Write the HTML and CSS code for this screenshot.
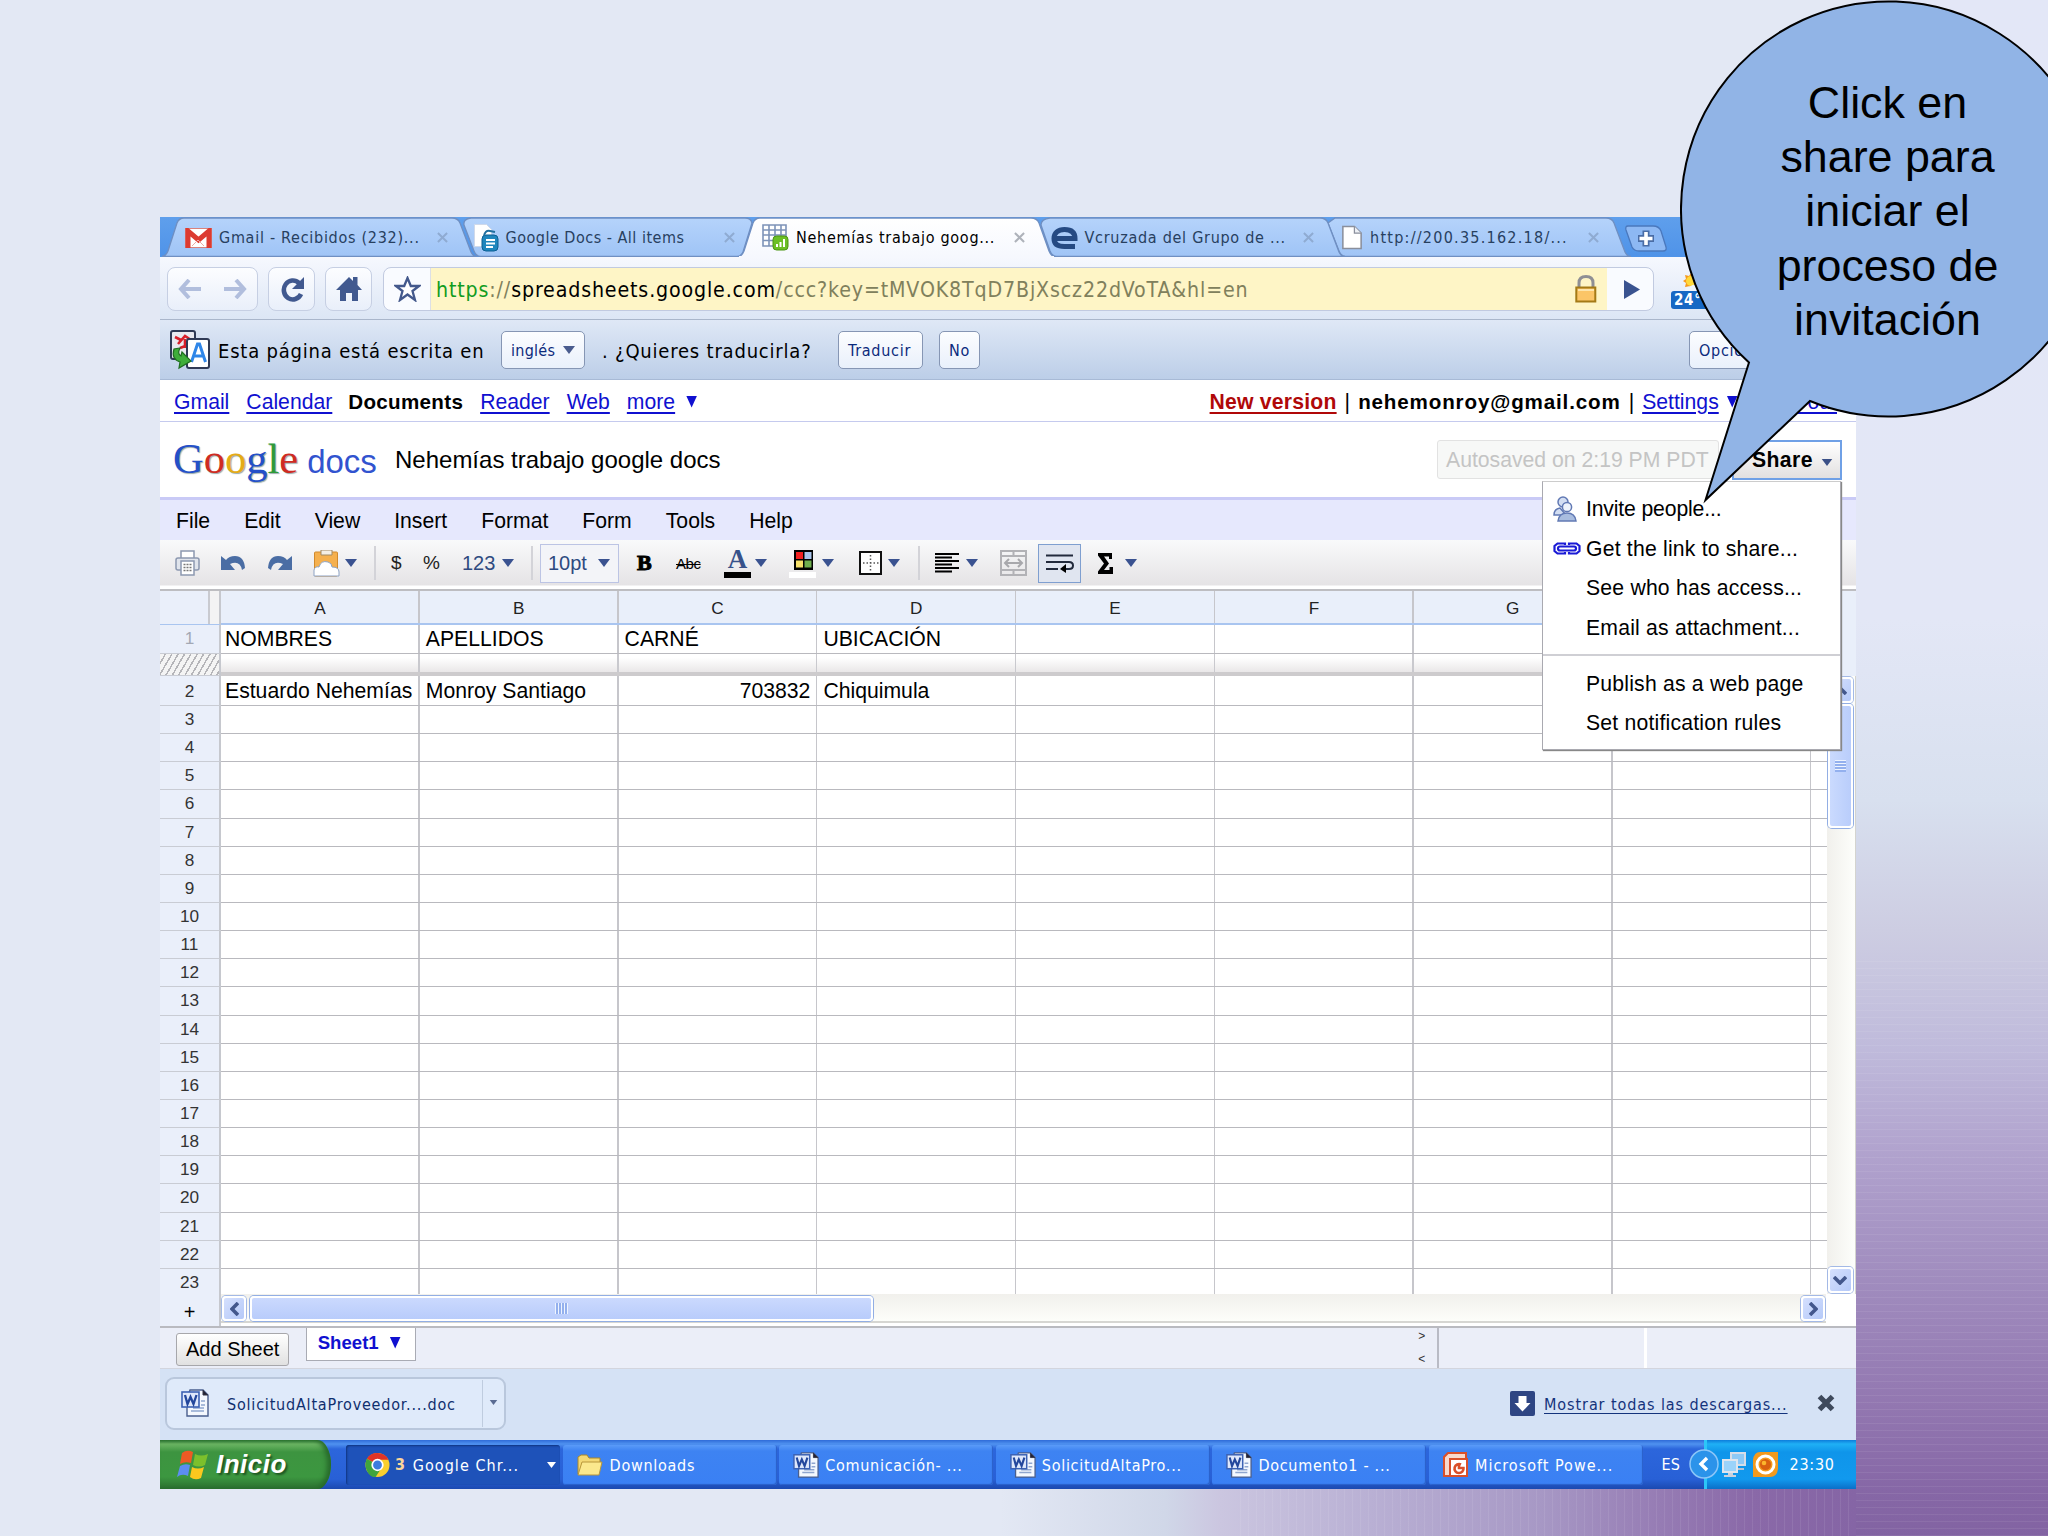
FILE: index.html
```html
<!DOCTYPE html>
<html lang="es">
<head>
<meta charset="utf-8">
<title>Nehemías trabajo google docs</title>
<link rel="stylesheet" href="styles.css">
</head>
<body>
<svg class="defs" width="0" height="0" aria-hidden="true">
  <symbol id="caret" viewBox="0 0 12 8"><path d="M0 0h12L6 8z" fill="currentColor"/></symbol>
  <symbol id="word" viewBox="0 0 28 28">
    <path d="M9 1h13l5 5v21H6V10z" fill="#f4f8fe" stroke="#4a5f8e" stroke-width="1.4"/>
    <path d="M22 1v5h5" fill="#223" stroke="#334" />
    <path d="M10 22h13M20 12h4M20 16h4M12 19h11" stroke="#8fa6cf" stroke-width="1.6"/>
    <rect x="1" y="3" width="17" height="15" fill="#dfe8fb" stroke="#3c62b4" stroke-width="1.6"/>
    <path d="M4 6l2.5 9L9.500 8l3 7L15.500 6" fill="none" stroke="#23479c" stroke-width="2.300"/>
  </symbol>
  <symbol id="page" viewBox="0 0 22 26"><path d="M1.500 1.500h12l7 7v16h-19z" fill="#fff" stroke="#8a8f9c" stroke-width="1.6"/><path d="M13.500 1.500v7h7" fill="#eef1f6" stroke="#8a8f9c" stroke-width="1.300"/></symbol>
  <symbol id="close" viewBox="0 0 12 12"><path d="M1 1l10 10M11 1L1 11" stroke="currentColor" stroke-width="2.200"/></symbol>
</svg>

<main class="window">
  <div class="tabstrip">
    <svg class="tabshapes" viewBox="0 0 1696 40" width="1696" height="40">
      <defs>
        <linearGradient id="tg" x1="0" y1="0" x2="0" y2="1"><stop offset="0" stop-color="#b5d3fb"/><stop offset="1" stop-color="#9fc4f6"/></linearGradient>
        <linearGradient id="ta" x1="0" y1="0" x2="0" y2="1"><stop offset="0" stop-color="#fff"/><stop offset="1" stop-color="#f6f8fe"/></linearGradient>
      </defs>
      <g fill="url(#tg)" stroke="#6f8fc2" stroke-width="1.300">
        <path d="M1175 1H1446Q1452 1 1454 6L1465 35Q1467 39.500 1471 39.500H1185Q1181 39 1179 34L1168 6Z"/>
        <path d="M2 39.500Q6 39 8 34L17 6Q19 1 24 1H292Q298 1 300 6L311 35Q313 39.500 317 39.500Z"/>
        <path d="M311 1H585Q591 1 592 6L583 35Q581 39.500 577 39.500H320Q316 39 314 34L304 8Q303 2 311 1Z"/>
        <path d="M890 1H1160Q1166 1 1168 6L1179 35Q1181 39.500 1185 39.500H896Q892 39 890 34L881 8Q881 2 890 1Z"/>
      </g>
      <path d="M578 40Q582 39 584 34L593 6Q595 1 600 1H871Q877 1 879 6L889 34Q891 39 895 40Z" fill="url(#ta)" stroke="#6f8fc2" stroke-width="1.300"/>
      <path d="M579 40H894" stroke="#f6f8fe" stroke-width="2"/>
      <path d="M1468 9H1493Q1499 9 1501 14L1506 30Q1507 34 1503 34H1479Q1474 34 1472 30L1466 13Q1465 9 1468 9Z" fill="#8db8f3" stroke="#4a78bd" stroke-width="1.300"/>
      <path d="M1478 21.500h16M1486 13.500v16" stroke="#4a6da6" stroke-width="7"/>
      <path d="M1479.500 21.500h13M1486 15v13" stroke="#fff" stroke-width="3.600"/>
    </svg>
    <div class="tab">
      <svg width="27" height="20" viewBox="0 0 27 20"><rect x=".5" y=".5" width="26" height="19" fill="#fff" stroke="#d9827c"/><path d="M3 20V3l10.500 9L24 3v17" fill="none" stroke="#dc3a31" stroke-width="5"/><path d="M7 18l6-6 6 6" fill="none" stroke="#e9aaa6"/></svg>
      <span>Gmail - Recibidos (232)...</span><svg class="x" width="11" height="11"><use href="#close"/></svg>
    </div>
    <div class="tab t2">
      <svg width="25" height="30" viewBox="0 0 25 28"><path d="M.5.500h12l5 5v17H.5z" fill="#fff" stroke="#cfd9ea"/><rect x="8" y="11" width="16" height="16" rx="4" fill="#1f86bd" stroke="#0c5f92"/><path d="M10 12q1-6 6-5l5 1" fill="none" stroke="#1f6f9f" stroke-width="2"/><path d="M12 16h9M12 19.500h9M12 23h7" stroke="#fff" stroke-width="1.800"/></svg>
      <span>Google Docs - All items</span><svg class="x" width="11" height="11"><use href="#close"/></svg>
    </div>
    <div class="tab t3">
      <svg width="27" height="27" viewBox="0 0 27 27"><path d="M1 1h23v21H1zM1 6h23M1 11h23M1 16.500h23M7 1v21M13 1v21M19 1v21" fill="#fff" stroke="#7d93b8" stroke-width="1.600"/><rect x="11" y="12" width="15" height="14" rx="3.500" fill="#6cbf25" stroke="#4b9512"/><path d="M15 23v-3M18.500 23v-5M22 23v-8" stroke="#fff" stroke-width="2"/></svg>
      <span>Nehemías trabajo goog...</span><svg class="x" width="11" height="11"><use href="#close"/></svg>
    </div>
    <div class="tab t4">
      <svg width="27" height="22" viewBox="0 0 27 22"><path d="M3 11.500h21C24 5 20 2.500 13.500 2.500S3 6 3 11.500s4 8 10.500 8H24" fill="none" stroke="#254a83" stroke-width="5"/></svg>
      <span>Vcruzada del Grupo de ...</span><svg class="x" width="11" height="11"><use href="#close"/></svg>
    </div>
    <div class="tab t5">
      <svg width="22" height="25"><use href="#page"/></svg>
      <span>http://200.35.162.18/...</span><svg class="x" width="11" height="11"><use href="#close"/></svg>
    </div>
  </div>

  <div class="omnibar">
    <div class="btn nav">
      <svg width="24" height="20" viewBox="0 0 24 20"><path d="M11 1L3 10l8 9M3 10h20" fill="none" stroke="#b1bedd" stroke-width="4"/></svg>
      <svg width="24" height="20" viewBox="0 0 24 20"><path d="M13 1l8 9-8 9M21 10H1" fill="none" stroke="#b1bedd" stroke-width="4"/></svg>
    </div>
    <div class="btn"><svg width="26" height="26" viewBox="0 0 26 26"><path d="M20 7A9 9.500 0 1 0 22 18" fill="none" stroke="#41598f" stroke-width="4.600"/><path d="M25 1v12H13z" fill="#41598f"/></svg></div>
    <div class="btn"><svg width="26" height="26" viewBox="0 0 26 26"><path d="M13 1l4 4V1h4.500v8L26 14h-4v11h-6v-8h-6v8H4V14H0z" fill="#41598f"/></svg></div>
    <div class="url">
      <div class="star"><svg width="27" height="26" viewBox="0 0 27 26"><path d="M13.500 2l3.300 8H25l-6.500 5 2.500 9-7.500-5.500L6 24l2.500-9L2 10h8.200z" fill="#fff" stroke="#44598c" stroke-width="2.300"/></svg></div>
      <div class="address"><span><i>https</i><b>://</b>spreadsheets.google.com<b>/ccc?key=tMVOK8TqD7BjXscz22dVoTA&amp;hl=en</b></span>
        <svg width="22" height="28" viewBox="0 0 22 28"><path d="M4 13V8q0-6.500 7-6.500T18 8v5" fill="none" stroke="#8f8f94" stroke-width="3"/><rect x="1.300" y="12.500" width="19" height="14" fill="#fbc567" stroke="#a47a16" stroke-width="2"/><path d="M3 15h16" stroke="#fde5ac" stroke-width="2"/></svg></div>
      <div class="go"><svg width="16" height="19" viewBox="0 0 16 19"><path d="M0 0l16 9.500L0 19z" fill="#3a5390"/></svg></div>
    </div>
    <div class="weather">
      <svg width="48" height="20" viewBox="0 0 48 20"><path d="M20 2l2 3 4-1-1 4 4 2-4 2 1 4-6-1-6 1 1-4-3-2 3-2-1-4 4 1z" fill="#f69a1e"/><circle cx="20" cy="10" r="5" fill="#ffd93a"/><path d="M14 20q0-5 5-4 3-4 8-1 8 0 9 5z" fill="#eef4fb"/></svg>
      <strong>24°C</strong>
    </div>
  </div>

  <div class="translate">
    <svg width="40" height="40" viewBox="0 0 40 40"><rect x="1" y="1" width="24" height="28" rx="2" fill="#e9eaf0" stroke="#2f3a55" stroke-width="2"/><path d="M5 7l6 3M8 14l7-8 6 4M10 18l8-3M15 9v9" stroke="#d8202a" stroke-width="2.600" fill="none"/><rect x="17" y="9" width="22" height="29" rx="2" fill="#fff" stroke="#2f3a55" stroke-width="2"/><path d="M21.500 32l6-18h2l6 18M23.500 26h10" stroke="#2f86e8" stroke-width="3" fill="none"/><path d="M4 19q-3 10 6 13l-1 6 12-7-9-9-1 4q-4-2-1-8z" fill="#3fae3a" stroke="#1f6d20" stroke-width="1.200"/></svg>
    <span class="msg">Esta página está escrita en</span>
    <span class="chip lang"><span>inglés</span><svg width="12" height="8"><use href="#caret"/></svg></span>
    <span class="msg m2">. ¿Quieres traducirla?</span>
    <span class="chip yes"><span>Traducir</span></span>
    <span class="chip no"><span>No</span></span>
    <span class="chip opt"><span>Opciones</span><svg width="12" height="8"><use href="#caret"/></svg></span>
  </div>

  <nav class="gbar">
    <div class="links"><a>Gmail</a><a>Calendar</a><strong>Documents</strong><a>Reader</a><a>Web</a><a>more</a><em class="tri"></em></div>
    <div class="account"><a class="new">New version</a><span>|</span><strong>nehemonroy@gmail.com</strong><span>|</span><a>Settings</a><em class="tri"></em><span>|</span><a>Sign out</a></div>
  </nav>

  <header class="dochead">
    <div class="logo"><span class="g b">G</span><span class="g r">o</span><span class="g y">o</span><span class="g b">g</span><span class="g gr">l</span><span class="g r">e</span><span class="docs">docs</span></div>
    <h1>Nehemías trabajo google docs</h1>
    <div class="autosaved">Autosaved on 2:19 PM PDT</div>
    <div class="share">Share<svg width="12" height="7"><use href="#caret"/></svg></div>
  </header>

  <div class="menubar"><span>File</span><span>Edit</span><span>View</span><span>Insert</span><span>Format</span><span>Form</span><span>Tools</span><span>Help</span></div>

  <div class="tools">
    <svg width="25" height="26" viewBox="0 0 25 26"><path d="M6 8V1h13v7" fill="#fff" stroke="#8c98b0" stroke-width="1.500"/><rect x="1" y="8" width="23" height="12" rx="2" fill="#e0e4ec" stroke="#8c98b0" stroke-width="1.500"/><rect x="6" y="11" width="13" height="14" fill="#fff" stroke="#8c98b0" stroke-width="1.500"/><path d="M8.500 14.500h8M8.500 17.500h8M8.500 20.500h8" stroke="#777" stroke-dasharray="2 1" stroke-width="1.400"/></svg>
    <svg width="24" height="16" viewBox="0 0 24 16"><path d="M0 1l5 4Q8 1 14 1q9 0 10 12l-3 2Q19 5 9 9l5 6H0z" fill="#4a6da4"/></svg>
    <svg width="24" height="16" viewBox="0 0 24 16"><path d="M24 1l-5 4Q16 1 10 1 1 1 0 13l3 2Q5 5 15 9l-5 6h14z" fill="#4a6da4"/></svg>
    <svg width="27" height="27" viewBox="0 0 27 27"><rect x="1.500" y="2" width="23" height="24" rx="1" fill="#f5b04e" stroke="#d18a2c"/><path d="M8 0h11v5H8z" fill="#f4efe6" stroke="#a28a64"/><path d="M1 26v-6q1-4 5-3 2-7 9-5 4 1 4 5 7 0 7 5v4z" fill="#fff" stroke="#8ea3c4"/></svg>
    <svg class="ar" width="12" height="8"><use href="#caret"/></svg>
    <i class="sep"></i>
    <span class="sym">$</span><span class="sym">%</span><span class="num">123</span>
    <svg class="ar" width="12" height="8"><use href="#caret"/></svg>
    <i class="sep"></i>
    <span class="size"><span>10pt</span><svg class="ar" width="12" height="8"><use href="#caret"/></svg></span>
    <b class="bold">B</b><s class="abc">Abc</s>
    <span class="fg">A</span>
    <svg class="ar" width="12" height="8"><use href="#caret"/></svg>
    <svg width="27" height="29" viewBox="0 0 27 29"><rect x="5" y="1" width="19" height="20"/><path d="M7 3h7v7H7z" fill="#f12020"/><path d="M15.500 3h7v7h-7z" fill="#a9c4ea"/><path d="M7 11.500h7v7H7z" fill="#f6e06a"/><path d="M15.500 11.500h7v7h-7z" fill="#6fae4e"/><path d="M0 23h27v6H0z" fill="#fff"/></svg>
    <svg class="ar" width="12" height="8"><use href="#caret"/></svg>
    <svg width="23" height="24" viewBox="0 0 23 24"><rect x="1" y="1" width="21" height="22" fill="#fff" stroke="#111" stroke-width="2"/><path d="M11.500 4v17M4 12h16" stroke="#555" stroke-width="1.500" stroke-dasharray="1.500 2"/></svg>
    <svg class="ar" width="12" height="8"><use href="#caret"/></svg>
    <i class="sep"></i>
    <svg width="24" height="20" viewBox="0 0 24 20"><path d="M0 1h24M0 4.500h17M0 8h24M0 11.500h17M0 15h24M0 18.500h17" stroke="#000" stroke-width="2"/></svg>
    <svg class="ar" width="12" height="8"><use href="#caret"/></svg>
    <svg width="27" height="26" viewBox="0 0 27 26"><path d="M1 1h25v5H1zM1 20h25v5H1zM13.500 1v5M13.500 20v5M1 6v14M26 6v14" fill="none" stroke="#b2b2b6" stroke-width="2"/><path d="M5 13h17M9 9l-4 4 4 4M18 9l4 4-4 4" fill="none" stroke="#a8a8ac" stroke-width="2"/></svg>
    <span class="wrap"><svg width="28" height="19" viewBox="0 0 28 19"><path d="M0 1.500h27M0 8h23q4 0 4 3.500T23 15h-5M0 15h12" fill="none" stroke="#222a3c" stroke-width="2"/><path d="M14 15l6-5v9z" fill="#000"/></svg></span>
    <svg width="15" height="21" viewBox="0 0 15 21"><path d="M0 0h14v6h-3V3.500H6l5 7-5 6.500h5.500v-3H15V21H0v-2.500l6-8-6-8z"/></svg>
    <svg class="ar" width="12" height="8"><use href="#caret"/></svg>
  </div>

  <section class="sheet">
    <div class="row head"><span class="label"></span><div class="cells"><span>A</span><span>B</span><span>C</span><span>D</span><span>E</span><span>F</span><span>G</span><span>H</span></div></div>
    <div class="row first"><span class="label">1</span><div class="cells"><span>NOMBRES</span><span>APELLIDOS</span><span>CARNÉ</span><span>UBICACIÓN</span></div></div>
    <div class="row freeze"><span class="label"></span><div class="cells"></div></div>
    <div class="body">
      <div class="rows">
        <div class="row second"><span class="label">2</span><div class="cells"><span>Estuardo Nehemías</span><span>Monroy Santiago</span><span class="right">703832</span><span>Chiquimula</span></div></div>
        <div class="row"><span class="label">3</span><div class="cells"></div></div>
        <div class="row"><span class="label">4</span><div class="cells"></div></div>
        <div class="row"><span class="label">5</span><div class="cells"></div></div>
        <div class="row"><span class="label">6</span><div class="cells"></div></div>
        <div class="row"><span class="label">7</span><div class="cells"></div></div>
        <div class="row"><span class="label">8</span><div class="cells"></div></div>
        <div class="row"><span class="label">9</span><div class="cells"></div></div>
        <div class="row"><span class="label">10</span><div class="cells"></div></div>
        <div class="row"><span class="label">11</span><div class="cells"></div></div>
        <div class="row"><span class="label">12</span><div class="cells"></div></div>
        <div class="row"><span class="label">13</span><div class="cells"></div></div>
        <div class="row"><span class="label">14</span><div class="cells"></div></div>
        <div class="row"><span class="label">15</span><div class="cells"></div></div>
        <div class="row"><span class="label">16</span><div class="cells"></div></div>
        <div class="row"><span class="label">17</span><div class="cells"></div></div>
        <div class="row"><span class="label">18</span><div class="cells"></div></div>
        <div class="row"><span class="label">19</span><div class="cells"></div></div>
        <div class="row"><span class="label">20</span><div class="cells"></div></div>
        <div class="row"><span class="label">21</span><div class="cells"></div></div>
        <div class="row"><span class="label">22</span><div class="cells"></div></div>
        <div class="row last"><span class="label">23</span><div class="cells"></div></div>
      </div>
      <div class="vscroll">
        <span class="sbtn"><svg width="14" height="9" viewBox="0 0 14 9"><path d="M1 8l6-6 6 6" fill="none" stroke="#43578c" stroke-width="3.600"/></svg></span>
        <span class="thumb"><i></i></span>
        <span class="sbtn end"><svg width="14" height="9" viewBox="0 0 14 9"><path d="M1 1l6 6 6-6" fill="none" stroke="#43578c" stroke-width="3.600"/></svg></span>
      </div>
    </div>
    <div class="foot">
      <span class="label">+</span>
      <div class="hscroll">
        <span class="sbtn"><svg width="9" height="14" viewBox="0 0 9 14"><path d="M8 1L2 7l6 6" fill="none" stroke="#43578c" stroke-width="3.600"/></svg></span>
        <span class="thumb"><i></i></span>
        <span class="sbtn end"><svg width="9" height="14" viewBox="0 0 9 14"><path d="M1 1l6 6-6 6" fill="none" stroke="#43578c" stroke-width="3.600"/></svg></span>
      </div>
    </div>
  </section>

  <div class="sheetbar">
    <span class="add">Add Sheet</span>
    <span class="sheettab">Sheet1<em class="tri"></em></span>
    <div class="stat"><span>&gt;</span><span>&lt;</span></div>
    <div class="panel"></div><div class="panel p2"></div>
  </div>

  <div class="downloads">
    <div class="file"><svg width="28" height="28"><use href="#word"/></svg><span>SolicitudAltaProveedor....doc</span><div class="more"><svg width="9" height="5"><use href="#caret"/></svg></div></div>
    <svg class="dl" width="25" height="25" viewBox="0 0 25 25"><rect width="25" height="25" rx="2" fill="#2e4583"/><path d="M8.500 5h8v7h4l-8 8.500L4.500 12h4z" fill="#fff"/></svg>
    <a>Mostrar todas las descargas...</a>
    <svg class="dx" width="18" height="18" viewBox="0 0 18 18"><path d="M2.500 2.500l13 13M15.500 2.500l-13 13" stroke="#3f4a5c" stroke-width="5.200"/></svg>
  </div>

  <div class="taskbar">
    <div class="start"><svg width="32" height="30" viewBox="0 0 32 30"><path d="M5 3q5-4 11-1l-2 11q-6-2-11 1z" fill="#ee5a24"/><path d="M18 4q6 3 13 0l-3 11q-6 3-12 0z" fill="#7cc02c"/><path d="M3 16q5-3 10-1l-2 11q-6-3-11 1z" fill="#5c8df0"/><path d="M15 17q6 3 12 0l-3 11q-6 3-11-1z" fill="#fbc81e"/></svg><span>Inicio</span></div>
    <div class="task on"><svg width="25" height="28" viewBox="0 0 26 26"><circle cx="13" cy="13" r="12.500" fill="#f8cf2e"/><path d="M13 13L2 6.500Q5 .5 13 .5t11.500 7H13z" fill="#e03427"/><path d="M13 13L2 6.500Q-1 12 2 19t9 6.500l6-9z" fill="#3fa53c"/><circle cx="13" cy="13" r="5.500" fill="#3c7ce0" stroke="#fff" stroke-width="1.800"/></svg><b>3</b><span>Google Chr...</span><svg class="dd" width="9" height="6"><use href="#caret"/></svg></div>
    <div class="task fo"><svg width="26" height="22" viewBox="0 0 26 22"><path d="M1 20V3l3-2h6l2 3h11v5" fill="#f3d874" stroke="#a8862c"/><path d="M1 21L5 8h20l-3 13z" fill="#fbe88d" stroke="#b8963a"/></svg><span>Downloads</span></div>
    <div class="task"><svg width="26" height="28"><use href="#word"/></svg><span>Comunicación- ...</span></div>
    <div class="task"><svg width="26" height="28"><use href="#word"/></svg><span>SolicitudAltaPro...</span></div>
    <div class="task"><svg width="26" height="28"><use href="#word"/></svg><span>Documento1 - ...</span></div>
    <div class="task pp"><svg width="26" height="26" viewBox="0 0 26 26"><path d="M5 1h18v6H8v17H1V5z" fill="#f8d9cc" stroke="#d9502a" stroke-width="2"/><rect x="7" y="7" width="17" height="17" fill="#fff" stroke="#d9502a" stroke-width="2"/><path d="M18 12.500a4.500 4.500 0 1 0 2.500 3.500H16v-4.500" fill="none" stroke="#d9502a" stroke-width="2.600"/></svg><span>Microsoft Powe...</span></div>
    <span class="lang">ES</span>
    <div class="tray">
      <svg class="chev" width="30" height="30" viewBox="0 0 30 30"><circle cx="15" cy="15" r="14" fill="#2b93ea" stroke="#8cc6f8" stroke-width="1.500"/><path d="M18 9l-6 6 6 6" fill="none" stroke="#fff" stroke-width="3.400"/></svg>
      <svg class="net" width="24" height="26" viewBox="0 0 24 26"><rect x="9" y="1" width="14" height="12" fill="#8ec9f6" stroke="#d6dde8" stroke-width="2"/><path d="M13 16h9v2h-9z" fill="#b9c3d3"/><rect x="1" y="8" width="14" height="12" fill="#9bd3fa" stroke="#dfe5ee" stroke-width="2"/><path d="M6 21h5v2h3v2H2v-2h4z" fill="#c9d2de"/></svg>
      <svg class="ora" width="27" height="27" viewBox="0 0 27 27"><path d="M8 1h18v17q-1 8-8 8H1V9q1-8 7-8z" fill="#f39a1d"/><circle cx="13.500" cy="13.500" r="8.500" fill="none" stroke="#fff" stroke-width="3"/><circle cx="13.500" cy="13.500" r="5.500" fill="#d95f0f"/><circle cx="12" cy="12" r="2.300" fill="#fbb52c"/></svg>
      <span>23:30</span>
    </div>
  </div>

  <div class="sharemenu">
    <div><svg width="24" height="26" viewBox="0 0 24 26"><g fill="#d3def2" stroke="#6179b4" stroke-width="1.500"><circle cx="10" cy="6" r="5"/><path d="M1 19q0-6 6-7l6 7z"/><circle cx="14" cy="11" r="4.600" fill="#eef3fb"/><path d="M5 25q1-8 9-8t9 8z" fill="#a9bddf"/></g></svg><span class="tight">Invite people...</span></div>
    <div><svg width="28" height="13" viewBox="0 0 28 13"><g fill="none" stroke="#1a1ad6" stroke-width="2.200"><path d="M12 3V1.500H4.500L1.500 4v5l3 2.500H12V10M16 3V1.500h7.500l3 2.500v5l-3 2.500H16V10"/><rect x="5" y="4.500" width="18" height="4" rx="2"/></g></svg><span>Get the link to share...</span></div>
    <div><span>See who has access...</span></div>
    <div><span>Email as attachment...</span></div>
    <hr>
    <div><span>Publish as a web page</span></div>
    <div><span>Set notification rules</span></div>
  </div>
</main>

<aside class="callout">
  <svg width="368" height="504" viewBox="1680 0 368 504"><path d="M1749 362.500L1705.500 500L1810 401A207.500 207.500 0 1 0 1749 362.500Z" fill="#91b4e6" stroke="#000" stroke-width="2"/></svg>
  <p>Click en<br>share para<br>iniciar el<br>proceso de<br>invitación</p>
</aside>
</body>
</html>
```
FILE: styles.css
```css
* { box-sizing: border-box; }

body {
  position: relative;
  width: 2048px;
  height: 1536px;
  margin: 0;
  padding: 217px 0 0 160px;
  overflow: hidden;
  font: 21.2px "Liberation Sans", Arial, sans-serif;
  color: #000;
  background:
    repeating-linear-gradient(0deg, rgba(255,255,255,.07) 0 1px, transparent 1px 7px) right bottom / 192px 580px no-repeat,
    linear-gradient(#e3e7f7 0, #e3e7f6 620px, #d8e0ef 800px, #cdcde2 930px, #bfbadb 1050px, #b1a3ce 1150px, #a08cbe 1280px, #9378b1 1400px, #8667a6 1490px, #8263a2 1536px) right top / 192px 100% no-repeat,
    repeating-linear-gradient(90deg, rgba(255,255,255,.08) 0 1px, transparent 1px 8px) 1240px bottom / 616px 47px no-repeat,
    linear-gradient(90deg, #e3e8f4 0, #e3e8f4 1000px, #d0d7e8 1165px, #cbc6e0 1220px, #b9b0d4 1370px, #a798c5 1540px, #967cb4 1660px, #8a69a8 1750px, #8565a5 1856px) left bottom / 1856px 60px no-repeat,
    #e3e8f4;
}
.defs { position: absolute; }
svg { display: block; flex: none; }

.window { position: relative; width: 1696px; height: 1272px; background: #fff; }
.tabstrip, .omnibar, .translate, .downloads, .taskbar {
  font-family: "DejaVu Sans Condensed", "DejaVu Sans", sans-serif;
  font-stretch: condensed;
  font-size: 16px;
  letter-spacing: .72px;
  white-space: nowrap;
}

/* Tab strip */
.tabstrip { position: relative; display: flex; height: 40px; background: linear-gradient(#5f9fec, #4f93e8); }
.tabshapes { position: absolute; left: 0; top: 0; }
.tab { position: relative; display: flex; align-items: center; width: 288.500px; padding: 1px 0 0 25px; color: #27405f; }
.tab span { width: 218px; margin-left: 7px; line-height: 20px; }
.tab .x { color: #8fabd2; }
.t2 span { letter-spacing: .5px; }
.t3 { color: #000; }
.t3 .x { color: #aeb2ba; }
.t5 { padding-left: 27px; }
.t5 span { letter-spacing: 1.250px; }

/* Address row */
.omnibar { display: flex; height: 63px; padding: 10px 0 0 7px; background: linear-gradient(#f6f8fe, #dce6f5); border-bottom: 1px solid #a9b6cb; }
.btn { display: flex; align-items: center; justify-content: center; width: 47px; height: 44px; margin-right: 11px; border: 1.500px solid #c6cfe3; border-radius: 8px; background: linear-gradient(#fcfdff, #e9effa); }
.btn.nav { width: 91px; gap: 21px; }
.omnibar .btn + .btn { margin-left: -1px; }
.url { display: flex; width: 1271px; height: 44px; border: 1.500px solid #c1cae0; border-radius: 8px; overflow: hidden; background: #f9fbff; }
.star { display: flex; align-items: center; justify-content: center; width: 47px; border-right: 1px solid #dcdfe6; }
.address { display: flex; flex: 1; align-items: center; justify-content: space-between; padding: 0 10px 0 5px; background: #fef5c6; font-size: 21.200px; letter-spacing: .850px; }
.address i { color: #119c1f; font-style: normal; }
.address b { color: #80805c; font-weight: normal; }
.go { display: flex; align-items: center; width: 46px; padding-left: 17px; }
.weather { width: 60px; margin: 4px 0 0 17px; }
.weather strong { display: block; width: 58px; height: 18px; padding-left: 3px; border-radius: 3px; background: #1668c4; color: #fff; font-size: 15px; line-height: 18px; }

/* Translate bar */
.translate { display: flex; align-items: center; height: 60px; padding: 0 0 0 10px; background: linear-gradient(#dfe8f6, #bccee8); border-bottom: 1px solid #a8bad6; }
.msg { width: 283px; margin-left: 8px; padding-top: 2px; font-size: 20px; letter-spacing: .800px; }
.m2 { width: 229px; margin-left: 17px; }
.chip { display: flex; align-items: center; height: 38px; padding: 1px 9px 0; border: 1.500px solid #8696b4; border-radius: 5px; background: linear-gradient(#fcfdff, #e9f0fb); color: #0b2a7c; }
.chip svg { color: #4a5c8e; }
.lang.chip { width: 84px; justify-content: space-between; letter-spacing: .250px; }
.yes { width: 85px; margin-left: 7px; }
.no { width: 41px; margin-left: 16px; }
.opt { width: 130px; margin-left: 709px; gap: 8px; }

/* Google bar */
.gbar { display: flex; justify-content: space-between; align-items: center; height: 42px; padding: 2px 19px 0 14px; border-bottom: 1px solid #c5caee; white-space: nowrap; }
.gbar a { color: #1010d0; text-decoration: underline; text-decoration-thickness: 1.500px; text-underline-offset: 3px; }
.links strong { margin-left: -1px; font-size: 20.600px; letter-spacing: .300px; }
.links { display: flex; align-items: center; gap: 17px; }
.links .tri { margin-left: -6px; }
.account { display: flex; align-items: center; gap: 8px; }
.account strong { font-size: 20.600px; letter-spacing: .850px; }
.account .new { color: #b00808; font-weight: bold; letter-spacing: .200px; }
.tri { width: 11px; height: 12px; background: #1010d0; clip-path: polygon(0 0, 100% 0, 50% 100%); }

/* Document header */
.dochead { display: flex; align-items: center; height: 78px; padding: 0 14px 0 13px; border-bottom: 3px solid #c9caf6; white-space: nowrap; }
.logo { display: flex; align-items: baseline; width: 222px; padding-bottom: 2px; }
.g { font: 42.500px "Liberation Serif", serif; text-shadow: 1px 1px 1px #9aa; }
.b { color: #2450c8; } .r { color: #cf2b22; } .y { color: #e5ab16; } .gr { color: #2f9a3a; }
.docs { margin-left: 9px; font-size: 33px; color: #3153cf; }
.dochead h1 { flex: 1; margin: 0; font-size: 24px; font-weight: normal; }
.autosaved { width: 282px; height: 39px; padding-left: 8px; border: 1.500px solid #e2e2e2; border-radius: 3px; background: #f7f8f7; color: #c4c4c4; line-height: 38px; }
.share { display: flex; align-items: center; gap: 8px; width: 110px; height: 40px; margin-left: 13px; padding-left: 18px; border: 2px solid #6fa0e6; background: linear-gradient(#fff, #e2e0e0); font-weight: bold; letter-spacing: .400px; }
.share svg { color: #3b5087; margin-top: 5px; }

.menubar { display: flex; align-items: center; gap: 34px; height: 40px; padding: 2px 0 0 16px; background: #e6e8fd; }

/* Formatting toolbar */
.tools {
  display: grid; align-items: center; height: 49px; padding: 0 0 3px 15px;
  grid-template-columns: 46px 47px 45px 32px 29px 17px 32px 39px 40px 29px 9px 97px 39px 48px 31px 34px 33px 37px 29px 30px 17px 31px 34px 38px 60px 27px 20px;
  background: linear-gradient(#f9fafb, #e5e3e5 45px, #fff 46px);
}
.ar { color: #3a5290; }
.sep { width: 2px; height: 34px; background: #d3d3d8; }
.sym { font-size: 19px; color: #222; }
.num, .size { color: #2e4a80; font-size: 20px; }
.size { display: flex; align-items: center; justify-content: space-between; width: 79px; height: 39px; padding: 0 8px 0 7px; border: 1.500px solid #bcc4e4; background: #f3f4f8; }
.bold { font: bold 22px "Liberation Serif", serif; -webkit-text-stroke: 1px #000; }
.abc { font-size: 15px; letter-spacing: -.400px; }
.fg { width: 27px; height: 29px; border-bottom: 6px solid #000; color: #37528a; font: bold 27px/21px "Liberation Serif", serif; text-align: center; }
.wrap { display: flex; align-items: center; justify-content: center; width: 43px; height: 39px; border: 1.500px solid #7f9fd0; background: #e0e5f0; }

/* Spreadsheet */
.sheet { height: 737px; border-top: 2px solid #bdbdc1; background: #e9effa; }
.row { display: flex; height: 28.150px; }
.label { width: 61px; flex: none; border-right: 2px solid #c6c8ce; border-bottom: 1px solid #c9ccd4; background: #eaeffa; color: #333; font-size: 17.200px; line-height: 27px; text-align: center; }
.cells {
  display: grid; grid-template-columns: repeat(8, 198.800px); width: 1605.700px;
  border-bottom: 1px solid #b9b9be;
  background: repeating-linear-gradient(90deg, transparent 0 197.400px, #c6c6cb 197.400px 198.800px) #fff;
}
.cells span { padding-left: 6px; white-space: nowrap; overflow: hidden; line-height: 28px; }
.cells span:first-child { padding-left: 4px; }
.cells .right { padding: 0 7px 0 0; text-align: right; }
.head { height: 34px; }
.head .label { border-bottom-color: #a9c5f0; background: linear-gradient(90deg, transparent 48px, #c9cad0 48px 50px, #f3f3f4 50px) #eaeffa; }
.head .cells { border-bottom: 2px solid #a9c5f0; background-color: #e9effa; }
.head .cells span { padding: 0 1px 0 0; text-align: center; font-size: 17.200px; line-height: 34px; color: #222; }
.first { height: 29px; }
.first .label { color: #a3a8b4; }
.freeze { height: 22px; }
.freeze .label { background: repeating-linear-gradient(120deg, #f4f4f4 0 4px, #b5b5b9 4px 5.500px); }
.freeze .cells { border-bottom: 4px solid #cdcbcd; background: repeating-linear-gradient(90deg, transparent 0 197.400px, #c9c9ce 197.400px 198.800px), linear-gradient(#fff 20%, #e9e7e8); }
.second { height: 30px; }
.second .label, .second .cells span { line-height: 30px; }
.last { height: 25px; }
.last .label, .last .cells { border-bottom: 0; }
.body { display: flex; height: 618px; overflow: hidden; }
.rows { width: 1666.700px; flex: none; }
.vscroll { display: flex; flex-direction: column; width: 29.300px; padding: 1px 3px 1px 1px; background: linear-gradient(90deg, #f1f0ec, #fdfefb); border-right: 1.500px solid #d4d4cf; }
.sbtn { display: flex; align-items: center; justify-content: center; width: 25px; height: 26px; flex: none; border: 2px solid #fff; border-radius: 4px; background: linear-gradient(135deg, #d5e0fe, #b5c9f8); box-shadow: 0 0 0 1px #a3b9e6; }
.thumb { display: flex; align-items: center; justify-content: center; border: 2px solid #fff; border-radius: 4px; box-shadow: 0 0 0 1px #92aee4; }
.vscroll .thumb { width: 25px; height: 124px; margin-top: 1px; background: linear-gradient(90deg, #cadafe, #b9cdfb); }
.vscroll .thumb i { width: 11px; height: 12px; background: repeating-linear-gradient(#eef4fe 0 1.500px, #93b0ee 1.500px 3px); }
.vscroll .end { margin-top: auto; }
.foot { display: flex; height: 32px; background: #fff; }
.foot .label { border-bottom: 0; height: 32px; font-size: 20px; line-height: 36px; color: #000; }
.hscroll { display: flex; width: 1605px; height: 29px; padding: 2px 1px 1px; background: linear-gradient(#f1f0ec, #fdfefa); border-bottom: 2px solid #d6d6d2; }
.hscroll .sbtn { width: 24px; height: 25px; }
.hscroll .thumb { width: 623px; height: 25px; margin-left: 4px; background: linear-gradient(#cbd9fe, #b8ccfb); }
.hscroll .thumb i { width: 13px; height: 11px; background: repeating-linear-gradient(90deg, #eef4fe 0 1.500px, #93b0ee 1.500px 3px); }
.hscroll .end { margin-left: auto; }

/* Sheet tabs */
.sheetbar { display: flex; height: 43px; border-top: 2px solid #b9bac0; border-bottom: 1px solid #d3d5de; padding-left: 16px; background: #ebeef8; }
.add { width: 113px; height: 33px; margin-top: 5px; padding-left: 9px; border: 1.500px solid #a7a7ab; border-radius: 3px; background: linear-gradient(#fff, #e1e1e1); font-size: 20px; line-height: 30px; white-space: nowrap; }
.sheettab { display: flex; align-items: center; gap: 11px; width: 111px; height: 33px; margin-left: 17px; padding: 0 0 3px 11px; border: 1.500px solid #a9abb4; border-top: 0; background: #fff; color: #1010d0; font-size: 18.600px; font-weight: bold; }
.sheettab .tri { flex: none; }
.stat { display: flex; flex-direction: column; justify-content: space-between; width: 1024px; padding: 1px 12px 2px; text-align: right; font-size: 12px; color: #333; }
.panel { width: 210px; border-left: 2px solid #b9bbc5; border-right: 3px solid #fff; }
.panel.p2 { border: 0; }

/* Downloads shelf */
.downloads { display: flex; align-items: center; height: 71px; padding: 0 0 3px 5px; background: #d5e2f5; }
.file { display: flex; align-items: center; width: 341px; height: 53px; padding-left: 14px; border: 2px solid #b9c7dc; border-radius: 9px; background: #dfeafa; color: #0f2f6e; }
.file > span { width: 255px; margin-left: 18px; padding-top: 2px; letter-spacing: .800px; }
.more { height: 47px; border-left: 1px solid #bfccdf; padding: 20px 0 0 6px; color: #5a6b92; }
.dl { margin-left: 1004px; }
.downloads a { width: 273px; margin-left: 9px; padding-top: 3px; color: #14337c; letter-spacing: .920px; text-decoration: underline; text-underline-offset: 3px; }

/* Taskbar */
.taskbar { display: flex; align-items: center; height: 49px; background: linear-gradient(#2f6bd8 0, #4f92f0 4px, #2c66dc 9px, #2860d6 80%, #1b49b0); color: #fff; }
.start { display: flex; align-items: center; width: 171px; height: 49px; margin-right: 15px; padding-left: 17px; border-radius: 0 14px 14px 0 / 0 25px 25px 0; background: linear-gradient(#2f7a35 0, #6cb564 4px, #3d9440 12px, #3c9740 75%, #2b7030); box-shadow: inset -4px 0 5px #276a2b; }
.start span { margin-left: 7px; font: italic bold 26px "Liberation Sans", sans-serif; letter-spacing: .500px; text-shadow: 2px 2px 2px #1f5522; }
.task { display: flex; align-items: center; width: 214px; height: 40px; margin: 1px 2.600px 0 0; padding: 0 0 1px 14px; border-radius: 3px; background: linear-gradient(#5a9bf8, #3e83f2 6px, #3a80f4); box-shadow: inset -1px -1px 1px #2a5fc8; }
.task span { margin-left: 6px; padding-top: 1px; }
.task.on { padding-left: 19px; background: #1e52b9; box-shadow: inset 1px 1px 2px #10347f; }
.task b { margin-left: 5px; color: #fbd59a; }
.task.on span { width: 134px; margin-left: 7px; letter-spacing: 1.050px; }
.pp span { letter-spacing: 1px; }
.fo svg { margin-right: 1px; }
.taskbar > .lang { flex: none; width: 58px; padding-left: 16px; letter-spacing: 0; }
.tray { position: relative; display: flex; flex: 1; align-items: center; align-self: stretch; padding-left: 15px; background: linear-gradient(#0d7ddb 0, #1fb0f5 4px, #0f95ea 12px, #1199ee 80%, #0b6fc8); border-left: 3px solid #2cc6f8; }
.chev { position: absolute; left: -18px; top: 9px; }
.ora { margin: 0 11px 0 6px; }

/* Share menu */
.sharemenu { position: absolute; left: 1382px; top: 264px; width: 299px; height: 269px; padding: 7px 0 0 10px; border: 1.500px solid #a9a9b0; border-top-color: #ccc; background: #fff; box-shadow: 1px 1px 1px #888; }
.sharemenu div { display: flex; align-items: center; height: 39.700px; }
.sharemenu svg { width: 28px; }
.sharemenu div:first-child svg { width: 24px; margin-right: 4px; }
.sharemenu span { margin-left: 5px; letter-spacing: .2px; white-space: nowrap; }
.sharemenu .tight { letter-spacing: -.150px; }
.sharemenu div:not(:has(svg)) span { margin-left: 33px; }
.sharemenu hr { height: 2px; margin: 6px 0 8px -10px; border: 0; background: #cfcfd4; }

/* Speech balloon */
.callout { position: absolute; left: 1680px; top: 0; width: 416px; }
.callout p { position: absolute; left: 0; top: 74.600px; width: 415px; margin: 0; font-size: 44.800px; line-height: 54.400px; text-align: center; }
```
